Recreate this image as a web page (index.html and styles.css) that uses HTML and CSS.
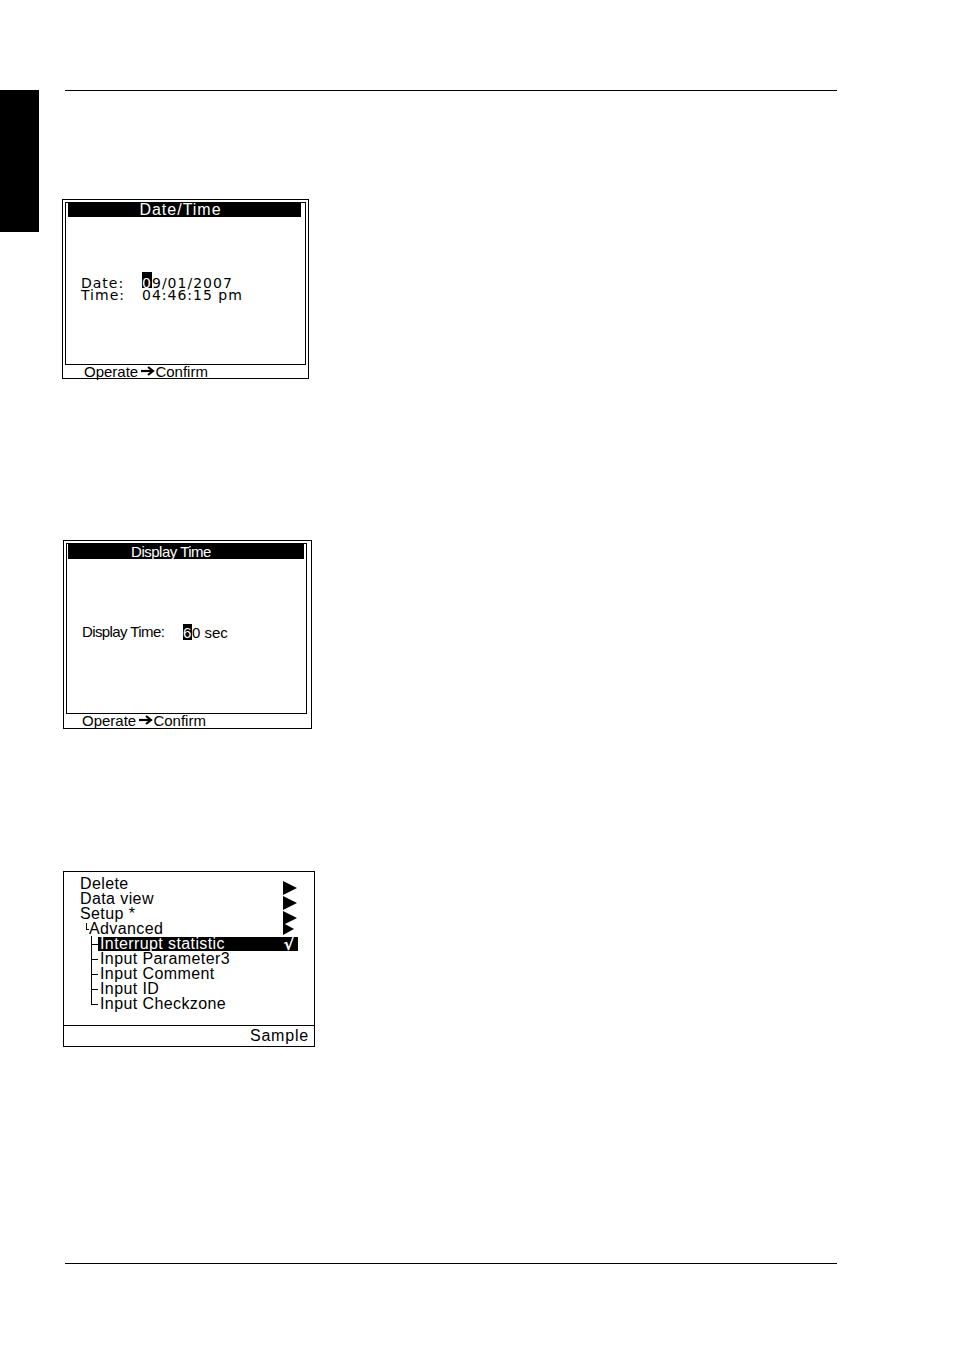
FILE: index.html
```html
<!DOCTYPE html>
<html>
<head>
<meta charset="utf-8">
<title>Date/Time settings</title>
<link rel="stylesheet" href="styles.css">
</head>
<body>
<div class="page">
  <div class="tab"></div>
  <main class="main">
    <div class="rule"></div>

    <section class="lcd lcd1">
      <div class="screen">
        <div class="titlebar">Date/Time</div>
        <div class="body1">
          <div class="field"><span class="lbl1">Date:</span><span><span class="cursor c1">0</span>9/01/2007</span></div>
          <div class="field"><span class="lbl1">Time:</span><span>04:46:15 pm</span></div>
        </div>
      </div>
      <div class="footer">Operate <svg class="arrow" width="14" height="10" viewBox="0 0 14 10"><path d="M0 5H11" stroke="#000" stroke-width="2.2" fill="none"/><path d="M7 1L12 5L7 9" stroke="#000" stroke-width="2.2" fill="none" stroke-linejoin="miter"/></svg>Confirm</div>
    </section>

    <section class="lcd lcd2">
      <div class="screen">
        <div class="titlebar">Display Time</div>
        <div class="body2">
          <div class="field"><span class="lbl2">Display Time:</span><span><span class="cursor c2">6</span>0 sec</span></div>
        </div>
      </div>
      <div class="footer">Operate <svg class="arrow" width="14" height="10" viewBox="0 0 14 10"><path d="M0 5H11" stroke="#000" stroke-width="2.2" fill="none"/><path d="M7 1L12 5L7 9" stroke="#000" stroke-width="2.2" fill="none" stroke-linejoin="miter"/></svg>Confirm</div>
    </section>

    <section class="menu">
      <div class="menu-body">
        <div class="row"><span>Delete</span><span class="tri"></span></div>
        <div class="row"><span>Data view</span><span class="tri"></span></div>
        <div class="row"><span>Setup *</span><span class="tri"></span></div>
        <div class="row"><span class="adv"><span class="corner"></span>Advanced</span><span class="tri small"></span></div>
        <div class="row sub"><span class="branch"></span><span class="hl"><span>Interrupt statistic</span><span class="check">√</span></span></div>
        <div class="row sub"><span class="branch"></span><span class="item">Input Parameter3</span></div>
        <div class="row sub"><span class="branch"></span><span class="item">Input Comment</span></div>
        <div class="row sub"><span class="branch"></span><span class="item">Input ID</span></div>
        <div class="row sub"><span class="branch last"></span><span class="item">Input Checkzone</span></div>
      </div>
      <div class="menu-foot">Sample</div>
    </section>

    <div class="rule bottom"></div>
  </main>
</div>
</body>
</html>
```

FILE: styles.css
```css
html, body {
  margin: 0;
  padding: 0;
  background: #fff;
}
body {
  width: 954px;
  height: 1354px;
  font-family: "Liberation Sans", Arial, sans-serif;
  color: #000;
}
.page {
  display: flex;
  align-items: flex-start;
  padding-top: 90px;
  gap: 23px;
}
.tab {
  width: 39px;
  height: 142px;
  background: #000;
  flex: none;
}
.main {
  display: flex;
  flex-direction: column;
  align-items: flex-start;
}
.rule {
  margin-left: 3px;
  width: 772px;
  border-top: 1px solid #000;
}
.rule.bottom {
  margin-top: 216px;
}

/* LCD dialog boxes */
.lcd {
  box-sizing: border-box;
  border: 1px solid #000;
  display: flex;
  flex-direction: column;
}
.screen {
  box-sizing: border-box;
  border: 1px solid #000;
}
.titlebar {
  background: #000;
  color: #fff;
  text-align: center;
}
.field {
  display: flex;
  white-space: nowrap;
}
.cursor {
  display: inline-block;
  background: #000;
  color: #fff;
  box-sizing: border-box;
}
.footer {
  font-size: 15px;
  white-space: nowrap;
}
.arrow {
  display: inline-block;
  vertical-align: 1px;
  margin-left: -1px;
}

/* box 1 */
.lcd1 {
  margin-top: 108px;
  width: 247px;
  height: 180px;
  padding: 2px 2px 0 2px;
}
.lcd1 .screen {
  height: 163px;
  padding: 0 4px 0 2px;
}
.lcd1 .titlebar {
  height: 14px;
  font-size: 16px;
  line-height: 14px;
  letter-spacing: 1px;
  padding-right: 8px;
}
.body1 {
  padding: 60px 0 0 13px;
  font-family: "DejaVu Sans", sans-serif;
  font-size: 14px;
  line-height: 12px;
  letter-spacing: 1px;
}
.lbl1 {
  width: 61px;
  flex: none;
}
.c1 {
  height: 16px;
  padding-top: 5px;
  line-height: 12px;
  margin-top: -5px;
  width: 10px;
}
.lcd1 .footer {
  height: 13px;
  line-height: 13px;
  padding-left: 19px;
}

/* box 2 */
.lcd2 {
  margin-top: 161px;
  margin-left: 1px;
  width: 249px;
  height: 189px;
  padding: 2px 4px 0 2px;
}
.lcd2 .screen {
  height: 171px;
  padding: 0 2px 0 1px;
}
.lcd2 .titlebar {
  height: 15px;
  font-size: 15px;
  line-height: 15px;
  letter-spacing: -0.5px;
  padding-right: 30px;
}
.body2 {
  padding: 65px 0 0 14px;
  font-size: 15px;
  line-height: 15px;
}
.lbl2 {
  width: 101px;
  flex: none;
  letter-spacing: -0.6px;
}
.c2 {
  width: 9px;
  height: 16px;
  padding-top: 2px;
  line-height: 14px;
}
.lcd2 .footer {
  height: 14px;
  line-height: 14px;
  padding-left: 16px;
}

/* box 3 menu */
.menu {
  margin-top: 142px;
  margin-left: 1px;
  box-sizing: border-box;
  width: 252px;
  height: 176px;
  border: 1px solid #000;
  font-size: 16px;
  letter-spacing: 0.4px;
}
.menu-body {
  box-sizing: border-box;
  height: 154px;
  padding: 4px 16px 0 16px;
  border-bottom: 1px solid #000;
}
.row {
  display: flex;
  align-items: flex-start;
  justify-content: space-between;
  height: 15px;
  line-height: 15px;
  white-space: nowrap;
}
.tri {
  width: 0;
  height: 0;
  margin-top: 5px;
  margin-right: 1px;
  border-top: 7.5px solid transparent;
  border-bottom: 7.5px solid transparent;
  border-left: 14px solid #000;
}
.tri.small {
  margin-top: 2px;
  border-top-width: 6px;
  border-bottom-width: 6px;
  border-left-width: 11px;
  margin-right: 4px;
}
.adv {
  display: flex;
  align-items: flex-start;
}
.corner {
  width: 2px;
  height: 6px;
  margin: 2px 0 0 6px;
  border-left: 1px solid #000;
  border-bottom: 1px solid #000;
}
.row.sub {
  justify-content: flex-start;
}
.branch {
  width: 7px;
  height: 15px;
  margin-left: 11px;
  flex: none;
  background:
    linear-gradient(#000, #000) no-repeat 1px 8px / 6px 1px,
    linear-gradient(#000, #000) no-repeat 0 0 / 1px 100%;
}
.branch.last {
  background:
    linear-gradient(#000, #000) no-repeat 1px 8px / 6px 1px,
    linear-gradient(#000, #000) no-repeat 0 0 / 1px 9px;
}
.hl {
  flex: 1;
  display: flex;
  justify-content: space-between;
  background: #000;
  color: #fff;
  height: 14px;
  margin-top: 1px;
  line-height: 14px;
  padding: 0 2px 0 2px;
}
.check {
  font-weight: bold;
  font-family: "DejaVu Sans", sans-serif;
  font-size: 17px;
  line-height: 14px;
  margin-right: 1px;
}
.item {
  padding-left: 2px;
}
.menu-foot {
  height: 19px;
  line-height: 19px;
  text-align: right;
  padding-right: 5px;
  letter-spacing: 0.8px;
}
```
